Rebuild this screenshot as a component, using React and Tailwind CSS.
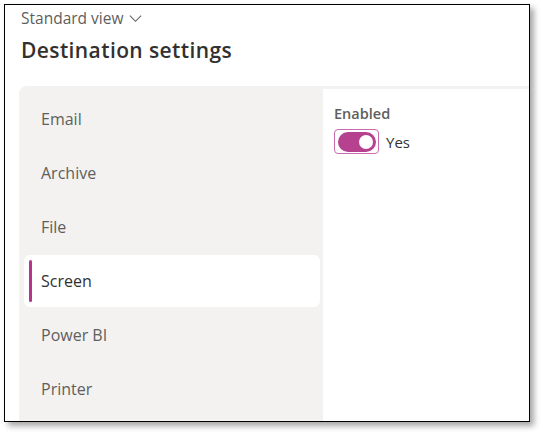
import React from 'react';

const font = { fontFamily: '"Open Sans", "Noto Sans", sans-serif' };

const items = ['Email', 'Archive', 'File', 'Screen', 'Power BI', 'Printer'];

const NavItem = ({ label, active }) => (
  <div
    className={
      'relative flex items-center h-[52px] rounded-md pl-[17px] ' +
      (active ? 'bg-white text-[#323130]' : 'text-[#605e5c]')
    }
  >
    {active && (
      <span className="absolute left-[5px] top-[5px] bottom-[5px] w-[3px] rounded-full bg-[#b5358c]"></span>
    )}
    <span className="text-[16px] leading-[20px]">{label}</span>
  </div>
);

const App = () => {
  return (
    <div className="w-[543px] h-[435px] bg-white" style={font}>
      <div className="ml-[4px] pt-[4px]">
        <div className="w-[526px] h-[418px] border border-black bg-white overflow-hidden shadow-[4px_4px_6px_rgba(0,0,0,0.35)] flex flex-col">
          {/* Header */}
          <div className="pl-[16px] pt-[3px]">
            <div className="flex items-center gap-[5px] text-[15.5px] leading-[20px] text-[#605e5c]">
              <span>Standard view</span>
              <svg width="15" height="15" viewBox="0 0 16 16" fill="none" stroke="#605e5c" strokeWidth="1.1">
                <path d="M2 5 8 11l6-6" />
              </svg>
            </div>
            <h1 className="mt-[8px] text-[21px] leading-[28px] font-semibold tracking-[0.4px] text-[#323130]">
              Destination settings
            </h1>
          </div>

          {/* Settings container */}
          <div className="flex flex-1 ml-[14px] mt-[22px] bg-[#f3f2f1] rounded-tl-lg overflow-hidden">
            {/* Left nav */}
            <div className="w-[304px] shrink-0 pt-[7px] pl-[5px] pr-[3px] flex flex-col gap-[2px]">
              {items.map((item) => (
                <NavItem key={item} label={item} active={item === 'Screen'} />
              ))}
            </div>

            {/* Right panel */}
            <div className="flex-1 mt-[3px] bg-white pl-[11px] pt-[15px]">
              <div className="text-[14.5px] leading-[20px] font-semibold text-[#605e5c]">Enabled</div>
              <div className="mt-[5px] flex items-center gap-[7px]">
                <div className="w-[45px] h-[25px] rounded-[4px] border border-[#c96bad] flex items-center justify-center">
                  <div className="w-[38px] h-[20px] rounded-full bg-[#b5418f] flex items-center justify-end pr-[3px]">
                    <span className="w-[14px] h-[14px] rounded-full bg-white"></span>
                  </div>
                </div>
                <span className="text-[15px] leading-[20px] text-[#323130]">Yes</span>
              </div>
            </div>
          </div>
        </div>
      </div>
    </div>
  );
};

export default App;
